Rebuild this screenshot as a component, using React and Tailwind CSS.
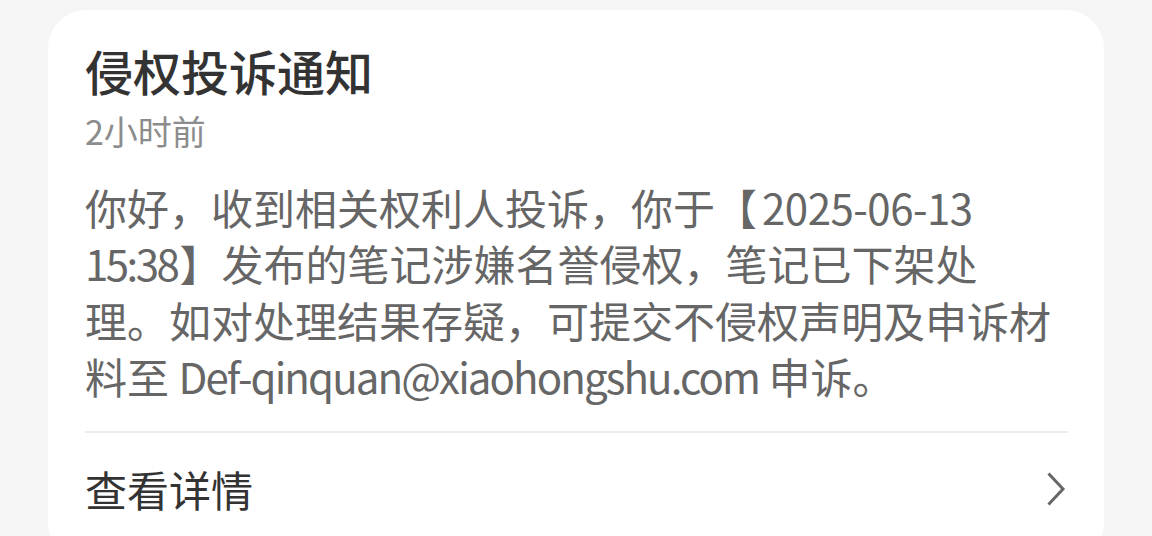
import React from "react";

const lines = [
  <>你好，收到相关权利人投诉，你于【<span className="ml-[5px] tracking-[-0.5px]">2025-06-13</span></>,
  <><span className="mr-[2px] tracking-[-2.5px]">15:38</span>】发布的笔记涉嫌名誉侵权，笔记已下架处</>,
  <>理。如对处理结果存疑，可提交不侵权声明及申诉材</>,
  <>料至 <span className="tracking-[-1.9px]">Def-qinquan@xiaohongshu.com</span> 申诉。</>,
];

const App = () => {
  return (
    <div
      className="w-[1152px] h-[536px] overflow-hidden bg-[#f5f5f5] pt-[10px] pl-[48px]"
      style={{ fontFamily: '"Noto Sans CJK SC", "Noto Sans", sans-serif' }}
    >
      <div className="w-[1056px] bg-white rounded-[38px] pt-[30px] pl-[37px] pr-[36px] pb-[44px]">
        {/* header */}
        <h1 className="text-[48px] leading-[60px] font-medium text-[#333333]">侵权投诉通知</h1>
        <p className="mt-[11px] text-[34px] leading-[40px] text-[#8c8c8c]">2小时前</p>

        {/* message body */}
        <div className="mt-[28px] text-[42px] leading-[56.3px] text-[#666666] whitespace-nowrap">
          {lines.map((l, i) => (
            <div key={i}>{l}</div>
          ))}
        </div>

        <div className="mt-[27px] h-[2px] bg-[#ececec]" />

        {/* footer link */}
        <div className="mt-[28px] flex items-center justify-between">
          <span className="text-[42px] leading-[56px] text-[#333333]">查看详情</span>
          <svg width="20" height="34" viewBox="0 0 20 34" className="mr-[2px]">
            <path d="M2.5 1.5 L17 17 L2.5 32.5" fill="none" stroke="#666666" strokeWidth="3" />
          </svg>
        </div>
      </div>
    </div>
  );
};

export default App;
